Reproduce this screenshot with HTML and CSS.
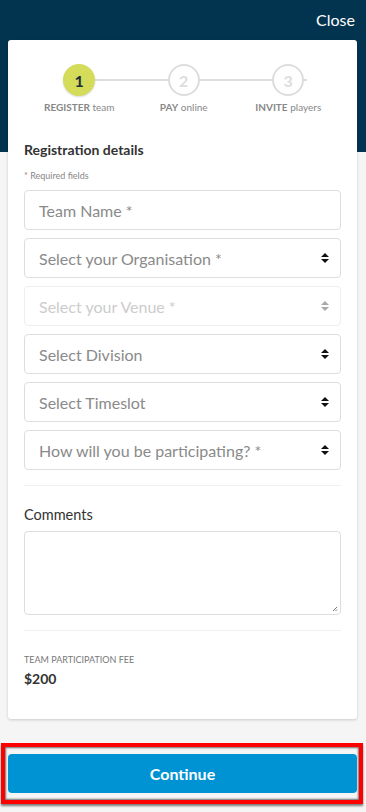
FILE: index.html
```html
<!DOCTYPE html>
<html>
<head>
<meta charset="utf-8">
<link rel="stylesheet" href="styles.css">
</head>
<body>
<div class="topbar"><span class="close">Close</span></div>
<div class="card">
  <div class="steps">
    <div class="step active"><div class="circle">1</div><div class="label"><b>REGISTER</b> team</div></div>
    <div class="step"><div class="circle">2</div><div class="label"><b>PAY</b> online</div></div>
    <div class="step"><div class="circle">3</div><div class="label"><b>INVITE</b> players</div></div>
  </div>
  <h2 class="heading">Registration details</h2>
  <div class="req">* Required fields</div>
  <div class="fields">
    <div class="field">Team Name *</div>
    <div class="field select">Select your Organisation *<svg class="arr" viewBox="0 0 8 10"><path d="M4 0L8 4H0Z M0 6H8L4 10Z"/></svg></div>
    <div class="field select disabled">Select your Venue *<svg class="arr" viewBox="0 0 8 10"><path d="M4 0L8 4H0Z M0 6H8L4 10Z"/></svg></div>
    <div class="field select">Select Division<svg class="arr" viewBox="0 0 8 10"><path d="M4 0L8 4H0Z M0 6H8L4 10Z"/></svg></div>
    <div class="field select">Select Timeslot<svg class="arr" viewBox="0 0 8 10"><path d="M4 0L8 4H0Z M0 6H8L4 10Z"/></svg></div>
    <div class="field select">How will you be participating? *<svg class="arr" viewBox="0 0 8 10"><path d="M4 0L8 4H0Z M0 6H8L4 10Z"/></svg></div>
  </div>
  <hr class="divider">
  <div class="comments-label">Comments</div>
  <div class="textarea"><svg class="grip" viewBox="0 0 6 6"><path d="M5 1L1 5M5 3.5L3.5 5" stroke="#555" stroke-width="0.8"/></svg></div>
  <hr class="divider second">
  <div class="fee-label">TEAM PARTICIPATION FEE</div>
  <div class="fee">$200</div>
</div>
<div class="annot">
  <button class="continue">Continue</button>
</div>
</body>
</html>
```
FILE: styles.css
```css
html, body {
  margin: 0;
  padding: 0;
}
body {
  width: 366px;
  height: 812px;
  overflow: hidden;
  font-family: Lato, "Noto Sans", sans-serif;
  background: linear-gradient(#03344f 0, #03344f 152px, #f5f5f5 152px);
  color: #333;
}
.topbar {
  height: 40px;
  display: flex;
  justify-content: flex-end;
  align-items: center;
  padding-right: 11px;
  box-sizing: border-box;
  padding-bottom: 1px;
}
.close {
  color: #fff;
  font-size: 16px;
}
.card {
  margin: 0 9px 0 8px;
  background: #fff;
  border-radius: 3px;
  box-shadow: 0 1px 3px rgba(0,0,0,0.18);
  padding: 24px 16px 14px;
  height: 679px;
  box-sizing: border-box;
}
.steps {
  display: grid;
  grid-template-columns: repeat(3, 104.5px);
  margin-left: 3px;
  position: relative;
}
.steps::before {
  content: "";
  position: absolute;
  left: 52px;
  width: 228px;
  top: 15px;
  height: 1.5px;
  background: #ddd;
}
.step {
  display: flex;
  flex-direction: column;
  align-items: center;
  position: relative;
}
.circle {
  width: 32px;
  height: 32px;
  box-sizing: border-box;
  border-radius: 50%;
  border: 2px solid #ddd;
  background: #fff;
  color: #ddd;
  font-weight: 700;
  font-size: 16px;
  display: flex;
  align-items: center;
  justify-content: center;
}
.step.active .circle {
  background: #d4dc5a;
  border-color: #d4dc5a;
  color: #1c2f3c;
  box-shadow: 0 1px 2px rgba(0,0,0,0.15);
}
.label {
  margin-top: 5px;
  font-size: 10px;
  color: #888;
  line-height: 12px;
  white-space: nowrap;
}
.label b {
  font-weight: 700;
}
.heading {
  margin: 28px 0 0;
  font-size: 14px;
  font-weight: 700;
  line-height: 17px;
  color: #333;
}
.req {
  font-size: 9px;
  color: #888;
  margin-top: 12px;
  line-height: 11px;
}
.fields {
  display: flex;
  flex-direction: column;
  gap: 8px;
  margin-top: 9px;
}
.field {
  height: 40px;
  box-sizing: border-box;
  border: 1px solid #ddd;
  border-radius: 4px;
  padding: 0 11px 0 14px;
  display: flex;
  align-items: center;
  justify-content: space-between;
  font-size: 16px;
  color: #8a8a8a;
}
.arr {
  width: 8px;
  height: 10px;
  fill: #111;
}
.field.disabled {
  border-color: #eee;
  color: #ccc;
}
.field.disabled .arr {
  fill: #aaa;
}
.divider {
  border: 0;
  border-top: 1px solid #f0f0f0;
  margin: 15px 0 0;
}
.comments-label {
  margin-top: 20px;
  font-size: 14.5px;
  line-height: 17px;
  color: #333;
}
.textarea {
  margin-top: 8px;
  height: 84px;
  box-sizing: border-box;
  border: 1px solid #ddd;
  border-radius: 4px;
  display: flex;
  justify-content: flex-end;
  align-items: flex-end;
  padding: 2px;
}
.grip {
  width: 6px;
  height: 6px;
}
.divider.second {
  margin-top: 15px;
}
.fee-label {
  margin-top: 23px;
  font-size: 9px;
  color: #777;
  line-height: 11px;
}
.fee {
  margin-top: 5px;
  font-size: 14px;
  font-weight: 700;
  color: #333;
  line-height: 17px;
}
.annot {
  margin: 24px 3px 0 1px;
  border: 4px solid #ff0000;
  padding: 7px 2px 7px 3px;
  box-shadow: inset 0 0 2px 1px rgba(0,0,0,0.55), 0 2px 2px rgba(0,0,0,0.5);
}
.continue {
  display: block;
  width: 100%;
  height: 39px;
  border: 0;
  border-radius: 4px;
  background: #0093d3;
  color: #fff;
  font-family: Lato, "Noto Sans", sans-serif;
  font-weight: 700;
  font-size: 16px;
}
```
